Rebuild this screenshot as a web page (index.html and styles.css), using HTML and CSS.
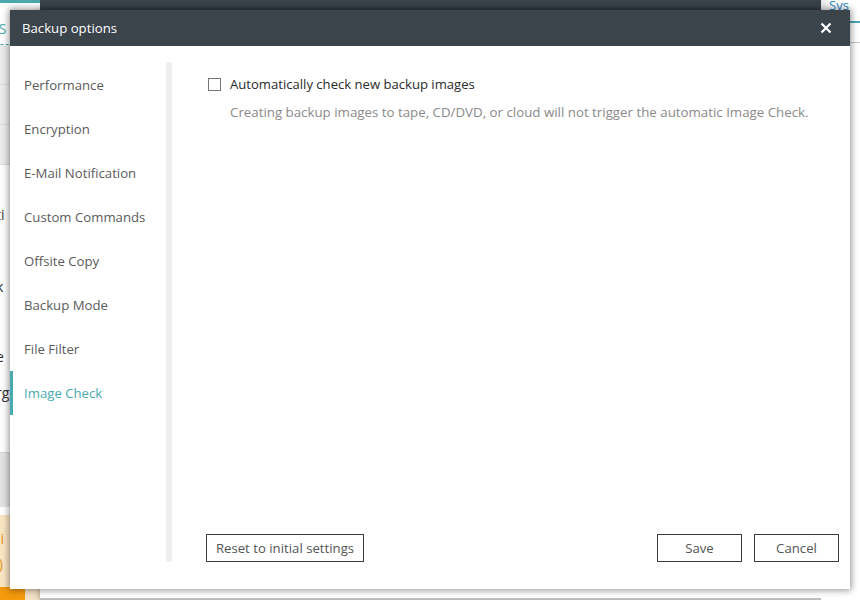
FILE: index.html
```html
<!DOCTYPE html>
<html lang="en">
<head>
<meta charset="utf-8">
<title>Backup options</title>
<link rel="stylesheet" href="styles.css">
</head>
<body>
<div class="app">
  <div class="side">
    <div class="side-top"></div>
    <div class="side-head"><span>AS</span></div>
    <div class="side-gray"><div class="sg-row"></div><div class="sg-row"></div><div class="sg-row"></div></div>
    <div class="side-list">
      <div class="side-row r1">ti</div>
      <div class="side-row r2">k</div>
      <div class="side-row r3">e</div>
      <div class="side-row r4">rg</div>
    </div>
    <div class="side-band"></div>
    <div class="side-warn"><span>oi</span><span>s)</span></div>
    <div class="side-orange"><i></i><b></b></div>
  </div>
  <div class="main">
    <div class="main-bar"></div>
    <div class="main-panel"></div>
  </div>
  <div class="right">
    <div class="right-tab">Sys</div>
    <div class="right-line"></div>
    <div class="right-gray"></div>
  </div>
</div>

<div class="dialog">
  <div class="titlebar">
    <span class="title">Backup options</span>
    <svg class="close" width="12" height="12" viewBox="0 0 12 12"><path d="M1.5 1.5 L10.5 10.5 M10.5 1.5 L1.5 10.5" stroke="#fff" stroke-width="2.2" fill="none"/></svg>
  </div>
  <div class="body">
    <nav class="nav">
      <div class="nav-item">Performance</div>
      <div class="nav-item">Encryption</div>
      <div class="nav-item">E-Mail Notification</div>
      <div class="nav-item">Custom Commands</div>
      <div class="nav-item">Offsite Copy</div>
      <div class="nav-item">Backup Mode</div>
      <div class="nav-item">File Filter</div>
      <div class="nav-item active">Image Check</div>
    </nav>
    <div class="content">
      <label class="check-row"><span class="box"></span><span class="label">Automatically check new backup images</span></label>
      <p class="desc">Creating backup images to tape, CD/DVD, or cloud will not trigger the automatic Image Check.</p>
      <div class="actions">
        <button class="btn reset">Reset to initial settings</button>
        <div class="right-btns">
          <button class="btn save">Save</button>
          <button class="btn cancel">Cancel</button>
        </div>
      </div>
    </div>
  </div>
</div>
</body>
</html>
```
FILE: styles.css
```css
* { box-sizing: border-box; }
html, body { margin: 0; padding: 0; }
body {
  width: 860px;
  height: 600px;
  overflow: hidden;
  font-family: "Open Sans", "Noto Sans", sans-serif;
  font-size: 13px;
  background: #fff;
  position: relative;
}

/* ---------- background app ---------- */
.app {
  display: grid;
  grid-template-columns: 40px 1fr 39px;
  height: 600px;
}
.side { display: flex; flex-direction: column; background: #fff; }
.side-top { height: 3px; background: #4aa9ae; }
.side-head {
  height: 42px;
  border-bottom: 1px dashed #4aa9ae;
  color: #4aa9ae;
  font-size: 14px;
  display: flex;
  align-items: flex-end;
  padding-bottom: 6px;
  margin-left: -10px;
}
.side-gray { height: 120px; display: flex; flex-direction: column; }
.sg-row { flex: 1; background: #ececec; border-bottom: 1px solid #dcdcdc; }
.side-list { height: 287px; position: relative; background: #fff; }
.side-row { position: absolute; left: -4px; font-size: 14px; color: #333; }
.r1 { top: 40px; }
.r2 { top: 112px; }
.r3 { top: 182px; }
.r4 { top: 218px; }
.side-band { height: 55px; background: #e3e3e3; border-top: 1px solid #d5d5d5; }
.side-warn {
  margin-top: 8px;
  height: 72px;
  background: #fbe6c4;
  color: #e09020;
  font-size: 14px;
  display: flex;
  flex-direction: column;
  justify-content: center;
  gap: 6px;
  margin-left: -8px;
}
.side-orange { flex: 1; display: flex; }
.side-orange i { width: 25px; background: #f59a0c; }
.side-orange b { flex: 1; background: #f3e2c6; }

.main { display: flex; flex-direction: column; }
.main-bar { height: 10px; background: #3b434b; }
.main-panel {
  flex: 1;
  background: #fff;
  border-bottom: 2px solid #bcbcbc;
  box-shadow: 0 0 6px rgba(0,0,0,0.35);
}
.right { display: flex; flex-direction: column; background: #fff; }
.right-tab {
  height: 14px;
  color: #2a85c8;
  font-size: 13px;
  line-height: 10px;
  padding-left: 8px;
  background: linear-gradient(90deg, #e8e8e8, #fff 30%);
}
.right-line { height: 2px; margin-top: 7px; background: #4aa9ae; }
.right-gray { height: 1px; margin-top: 19px; background: #c8c8c8; }

/* ---------- dialog ---------- */
.dialog {
  position: absolute;
  left: 10px;
  top: 10px;
  width: 840px;
  height: 579px;
  background: #fff;
  display: flex;
  flex-direction: column;
  box-shadow: 0 0 7px 1px rgba(0,0,0,0.45);
}
.titlebar {
  height: 36px;
  background: #3b434b;
  display: flex;
  align-items: center;
  justify-content: space-between;
  padding: 0 18px 0 12px;
}
.title { color: #fff; font-size: 13.2px; }
.body {
  flex: 1;
  display: flex;
  padding: 16px 0 27px 0;
}
.nav {
  width: 162px;
  border-right: 6px solid #efefef;
  padding-top: 1px;
}
.nav-item {
  height: 44px;
  display: flex;
  align-items: center;
  padding-left: 14px;
  color: #5b5b5b;
  font-size: 13.2px;
}
.nav-item.active {
  color: #49aab0;
  box-shadow: inset 3px 0 0 #49aab0;
}
.content {
  flex: 1;
  display: flex;
  flex-direction: column;
  padding: 0 11px 0 34px;
}
.check-row {
  margin-top: 12px;
  display: flex;
  align-items: center;
  gap: 9px;
  padding-left: 2px;
  height: 20px;
}
.box {
  width: 13px;
  height: 13px;
  border: 1px solid #777;
  background: #fff;
}
.label { color: #2a2a2a; font-size: 13.1px; }
.desc {
  margin: 8px 0 0 24px;
  color: #8a8a8a;
  font-size: 13.3px;
  line-height: 20px;
}
.actions {
  margin-top: auto;
  display: flex;
  justify-content: space-between;
  align-items: flex-end;
}
.right-btns { display: flex; gap: 12px; }
.btn {
  height: 28px;
  border: 1px solid #3c3c3c;
  background: #fff;
  color: #555;
  font-family: inherit;
  font-size: 13.2px;
  padding: 0;
}
.reset { width: 158px; }
.save, .cancel { width: 85px; }
```
